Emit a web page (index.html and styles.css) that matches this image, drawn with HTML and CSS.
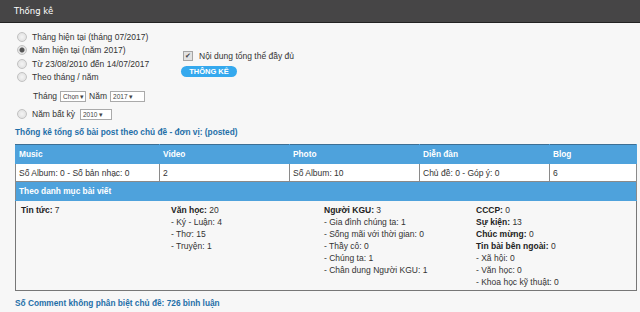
FILE: index.html
```html
<!DOCTYPE html>
<html lang="vi">
<head>
    <meta charset="UTF-8">
    <title>Thống kê</title>
    <link rel="stylesheet" href="styles.css">
</head>
<body>

    <div class="topbar">Thống kê</div>

    <div class="filter">
        <div class="filter-left">
            <label class="opt"><input type="radio" name="ky"> Tháng hiện tại (tháng 07/2017)</label>
            <label class="opt"><input type="radio" name="ky" checked> Năm hiện tại (năm 2017)</label>
            <label class="opt"><input type="radio" name="ky"> Từ 23/08/2010 đến 14/07/2017</label>
            <label class="opt"><input type="radio" name="ky"> Theo tháng / năm</label>
            <div class="opt sub">Tháng <span class="select w-chon">Chọn ▾</span> Năm <span class="select w-nam">2017 ▾</span></div>
            <label class="opt last"><input type="radio" name="ky"> Năm bất kỳ <span class="select w-nam2">2010 ▾</span></label>
        </div>
        <div class="filter-right">
            <div class="check"><span class="box">✔</span> Nội dung tổng thể đầy đủ</div>
            <button class="btn-thongke">THÔNG KÊ</button>
        </div>
    </div>

    <h3 class="sec-title">Thống kê tổng số bài post theo chủ đề - đơn vị: (posted)</h3>

    <table class="stats">
        <colgroup>
            <col class="c1"><col class="c2"><col class="c3"><col class="c4"><col class="c5">
        </colgroup>
        <tr class="head">
            <th>Music</th><th>Video</th><th>Photo</th><th>Diễn đàn</th><th>Blog</th>
        </tr>
        <tr class="data">
            <td>Số Album: 0 - Số bản nhạc: 0</td><td>2</td><td>Số Album: 10</td><td>Chủ đề: 0 - Góp ý: 0</td><td>6</td>
        </tr>
        <tr class="head group">
            <th colspan="5">Theo danh mục bài viết</th>
        </tr>
        <tr class="detail">
            <td colspan="5">
                <div class="cats">
                    <div>
                        <b>Tin tức:</b> 7
                    </div>
                    <div>
                        <b>Văn học:</b> 20<br>
                        - Ký - Luận: 4<br>
                        - Thơ: 15<br>
                        - Truyện: 1
                    </div>
                    <div>
                        <b>Người KGU:</b> 3<br>
                        - Gia đình chúng ta: 1<br>
                        - Sống mãi với thời gian: 0<br>
                        - Thầy cô: 0<br>
                        - Chúng ta: 1<br>
                        - Chân dung Người KGU: 1
                    </div>
                    <div>
                        <b>CCCP:</b> 0<br>
                        <b>Sự kiện:</b> 13<br>
                        <b>Chúc mừng:</b> 0<br>
                        <b>Tin bài bên ngoài:</b> 0<br>
                        - Xã hội: 0<br>
                        - Văn học: 0<br>
                        - Khoa học kỹ thuật: 0
                    </div>
                </div>
            </td>
        </tr>
    </table>

    <h3 class="sec-title bottom">Số Comment không phân biệt chủ đề: 726 bình luận</h3>

</body>
</html>
```

FILE: styles.css
```css
body {
    margin: 0;
    background: #f7f7f7;
    font-family: 'Liberation Sans', Arial, sans-serif;
    font-size: 8.5px;
    color: #333;
}

.topbar {
    height: 22px;
    line-height: 22px;
    padding-left: 14px;
    background: #464546;
    border-bottom: 1px solid #222;
    color: #fff;
    font-family: 'DejaVu Sans', sans-serif;
    font-size: 8.5px;
}

.filter {
    display: flex;
    padding: 7px 0 0 17px;
}

.filter-left {
    width: 164px;
}

.opt {
    display: flex;
    align-items: center;
    height: 13.5px;
    gap: 5px;
    white-space: nowrap;
}

.opt input {
    appearance: none;
    margin: 0;
    width: 10px;
    height: 10px;
    border: 1px solid #c2c2c2;
    border-radius: 50%;
    background: radial-gradient(circle, #f4f4f4 0, #dcdcdc 100%);
}

.opt input:checked {
    background: radial-gradient(circle, #555 0 2px, #e4e4e4 3px);
}

.opt.sub {
    height: 18px;
    margin-top: 3px;
    padding-left: 16px;
    gap: 3px;
}

.opt.last {
    height: 18px;
}

.select {
    display: inline-flex;
    justify-content: space-between;
    height: 9px;
    line-height: 9px;
    padding: 0 2px;
    border: 1px solid #aaa;
    background: #fff;
    font-size: 6.5px;
    color: #444;
}

.w-chon { width: 20px; }
.w-nam { width: 29px; }
.w-nam2 { width: 26px; }

.filter-right {
    padding-top: 21px;
    display: flex;
    flex-direction: column;
    align-items: flex-start;
}

.check {
    display: flex;
    align-items: center;
    gap: 6px;
    margin-left: 2px;
}

.check .box {
    width: 8px;
    height: 8px;
    line-height: 8px;
    border: 1px solid #a5a5a5;
    background: #e2e2e2;
    font-size: 7px;
    text-align: center;
    color: #444;
}

.btn-thongke {
    margin-top: 5px;
    width: 56px;
    height: 11px;
    padding: 0;
    border: none;
    border-radius: 6px;
    background: #35a9ee;
    color: #fff;
    font-family: 'Liberation Sans', Arial, sans-serif;
    font-size: 7.5px;
    font-weight: bold;
    line-height: 11px;
}

.sec-title {
    margin: 3px 0 0 15px;
    height: 12px;
    line-height: 12px;
    font-size: 8.3px;
    font-weight: bold;
    color: #1f6fa8;
}

.sec-title.bottom {
    margin-top: 6px;
}

.stats {
    margin: 6px 3px 0 15px;
    width: 622px;
    border-collapse: collapse;
    table-layout: fixed;
}

.c1 { width: 144px; }
.c2, .c3, .c4 { width: 130px; }

.stats th,
.stats td {
    padding: 0 3px;
    text-align: left;
}

.head th {
    height: 18px;
    background: #4ea2dc;
    color: #fff;
    font-size: 8.3px;
    font-weight: bold;
    border: 1px solid #4ea2dc;
}

.stats tr:first-child th {
    border-top: 1px solid #3d6f94;
}

.data td {
    height: 17px;
    background: #fff;
    border: 1px solid #8a8a8a;
    color: #333;
}

.group th {
    border-top: 1px solid #a8c7de;
    border-left-color: #8a8a8a;
    border-right-color: #8a8a8a;
}

.detail td {
    padding: 3px 0 2px 5px;
    border: 1px solid #777;
    border-top: none;
    vertical-align: top;
}

.cats {
    display: grid;
    grid-template-columns: 150px 153px 152px 1fr;
    line-height: 12px;
    color: #333;
}

.cats b {
    color: #222;
}
```
